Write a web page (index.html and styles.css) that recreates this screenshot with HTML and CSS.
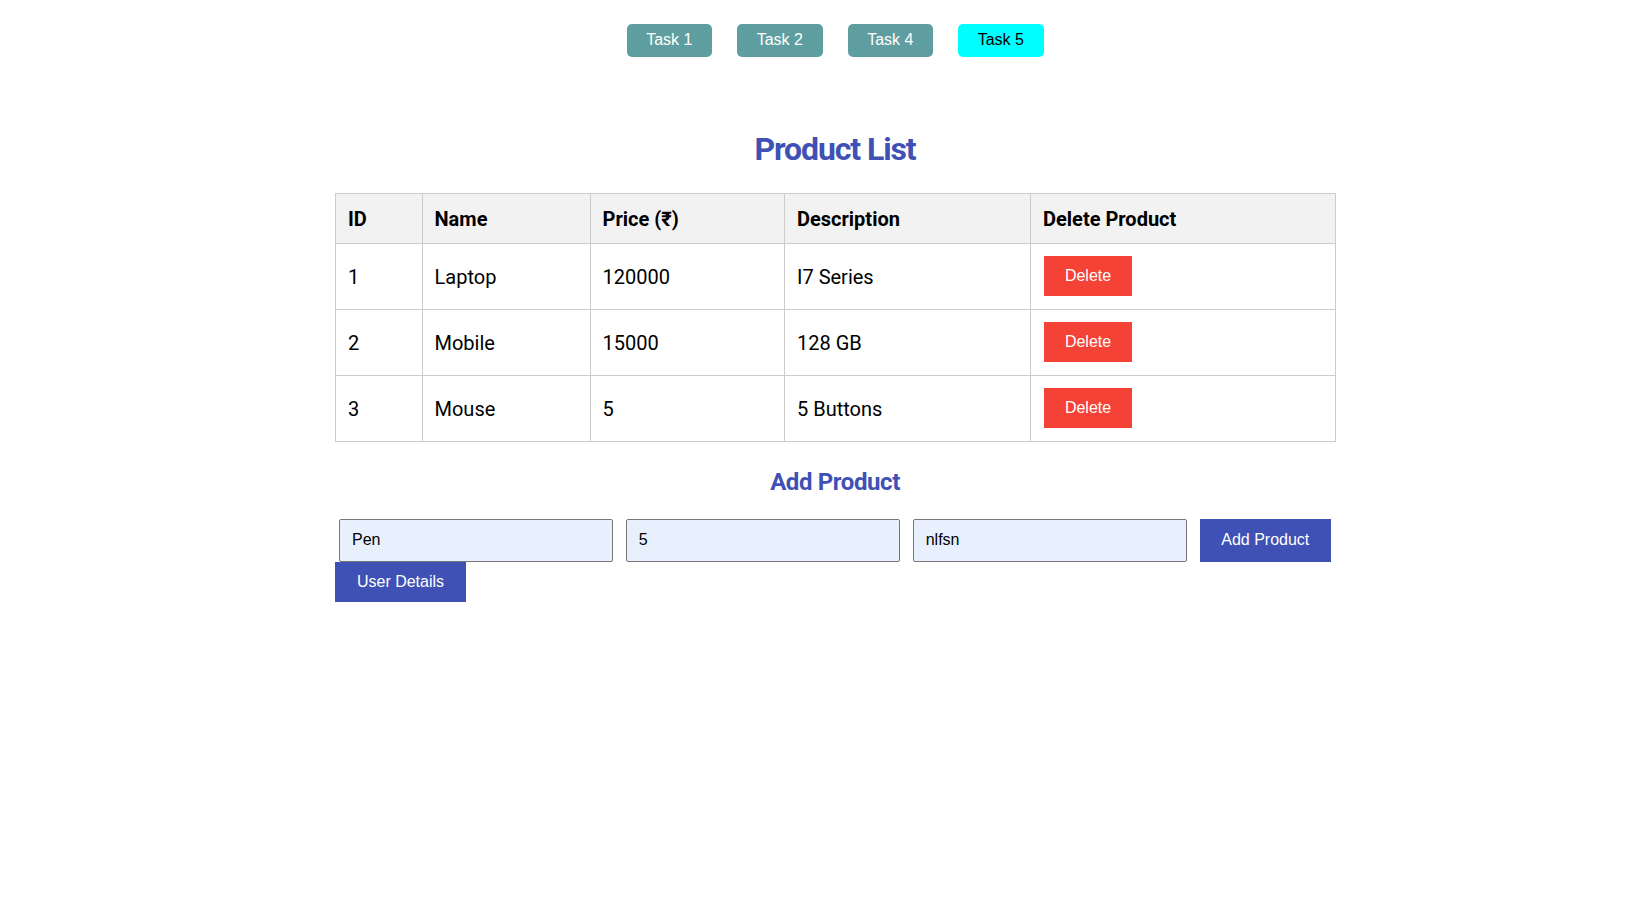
FILE: index.html
```html
<!DOCTYPE html>
<html lang="en">
<head>
<meta charset="utf-8">
<title>Product List</title>
<link rel="stylesheet" href="styles.css">
</head>
<body>
<div class="page">
  <nav class="tasks">
    <button class="task">Task 1</button>
    <button class="task">Task 2</button>
    <button class="task">Task 4</button>
    <button class="task active">Task 5</button>
  </nav>

  <h1 class="title">Product List</h1>

  <table class="products">
    <colgroup>
      <col class="c-id">
      <col class="c-name">
      <col class="c-price">
      <col class="c-desc">
      <col class="c-del">
    </colgroup>
    <thead>
      <tr>
        <th>ID</th>
        <th>Name</th>
        <th>Price (₹)</th>
        <th>Description</th>
        <th>Delete Product</th>
      </tr>
    </thead>
    <tbody>
      <tr>
        <td>1</td>
        <td>Laptop</td>
        <td>120000</td>
        <td>I7 Series</td>
        <td class="action"><button class="delete">Delete</button></td>
      </tr>
      <tr>
        <td>2</td>
        <td>Mobile</td>
        <td>15000</td>
        <td>128 GB</td>
        <td class="action"><button class="delete">Delete</button></td>
      </tr>
      <tr>
        <td>3</td>
        <td>Mouse</td>
        <td>5</td>
        <td>5 Buttons</td>
        <td class="action"><button class="delete">Delete</button></td>
      </tr>
    </tbody>
  </table>

  <h2 class="subtitle">Add Product</h2>

  <form class="add-form">
    <input class="field" type="text" value="Pen">
    <input class="field" type="text" value="5">
    <input class="field" type="text" value="nlfsn">
    <button class="primary add" type="button">Add Product</button>
  </form>
  <button class="primary user" type="button">User Details</button>
</div>
</body>
</html>
```

FILE: styles.css
```css
html, body {
  margin: 0;
  padding: 0;
  background: #ffffff;
}

body {
  padding-left: 22px;
  font-family: Roboto, "Liberation Sans", Arial, sans-serif;
  color: #000;
}

.page {
  width: 1000px;
  margin: 0 auto;
}

.tasks {
  display: flex;
  justify-content: center;
  gap: 25px;
  margin-top: 24px;
}

.task {
  width: 85.5px;
  height: 33px;
  padding: 0 0 1px;
  border: none;
  border-radius: 5px;
  background: #5f9ea0;
  color: #fff;
  font-family: "Liberation Sans", Arial, sans-serif;
  font-size: 16px;
}

.task.active {
  background: #00ffff;
  color: #000;
}

.title {
  margin: 74px 0 24px;
  text-align: center;
  color: #3f51b5;
  font-size: 32px;
  font-weight: 700;
  line-height: 37.5px;
  letter-spacing: -1.1px;
}

.products {
  width: 1000px;
  border-collapse: collapse;
  table-layout: fixed;
  border: 1px solid #cccccc;
}

.c-id { width: 86.5px; }
.c-name { width: 168px; }
.c-price { width: 194.5px; }
.c-desc { width: 246px; }
.c-del { width: 305px; }

.products th,
.products td {
  border: 1px solid #cccccc;
  text-align: left;
  font-size: 20px;
}

.products th {
  background: #f2f2f2;
  font-weight: 700;
  padding: 13px 12px 11px;
  line-height: 25px;
}

.products td {
  padding: 14px 12px 11px;
  line-height: 23px;
  vertical-align: middle;
}

.products td.action {
  padding: 12px 12px 13px;
}

.delete {
  display: block;
  width: 88px;
  height: 40px;
  margin-left: 1px;
  padding: 0;
  border: none;
  background: #f44336;
  color: #fff;
  font-family: "Liberation Sans", Arial, sans-serif;
  font-size: 16px;
}

.subtitle {
  margin: 26px 0 23px;
  text-align: center;
  color: #3f51b5;
  font-size: 24px;
  font-weight: 700;
  line-height: 28px;
  letter-spacing: -0.4px;
}

.add-form {
  display: flex;
  gap: 13px;
  padding: 0 4px;
  margin: 0;
}

.field {
  box-sizing: border-box;
  width: 274px;
  height: 43.5px;
  padding: 0 12px;
  border: 1px solid #767676;
  border-radius: 2px;
  background: #e8f0fe;
  color: #000;
  font-family: "Liberation Sans", Arial, sans-serif;
  font-size: 16px;
}

.primary {
  height: 40px;
  padding: 0;
  border: none;
  background: #3f51b5;
  color: #fff;
  font-family: "Liberation Sans", Arial, sans-serif;
  font-size: 16px;
}

.add {
  width: 131.5px;
  height: 43.5px;
}

.user {
  display: block;
  width: 131px;
}
```
